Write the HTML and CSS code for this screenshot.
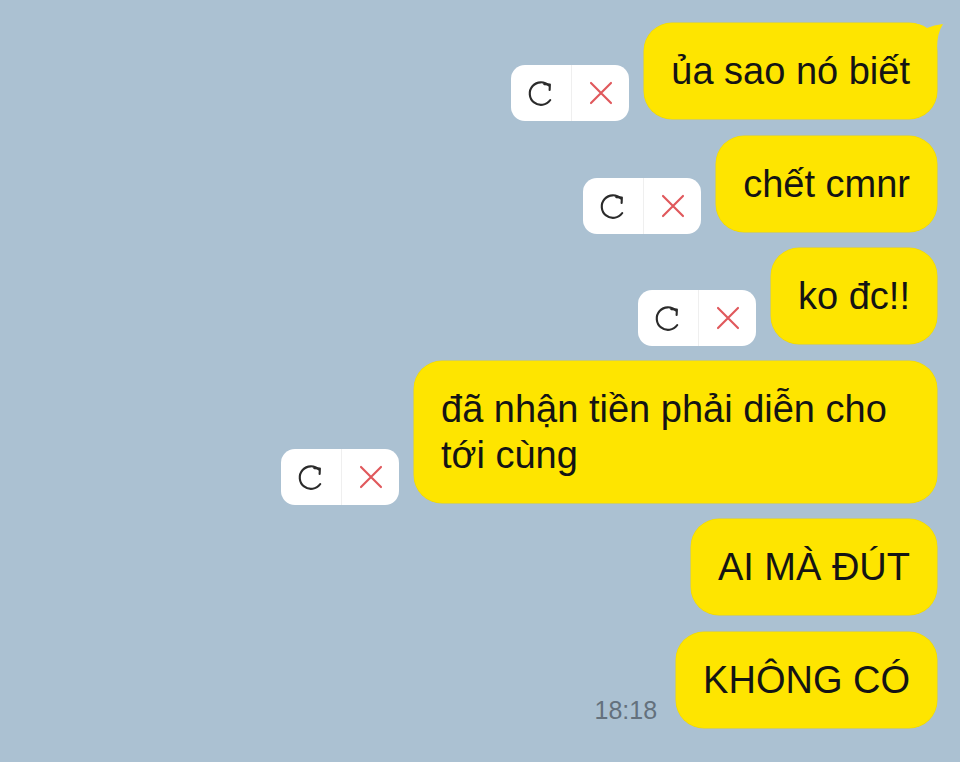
FILE: index.html
```html
<!DOCTYPE html>
<html lang="vi">
<head>
<meta charset="utf-8">
<title>Chat</title>
<link rel="stylesheet" href="styles.css">
</head>
<body>
<main class="chat">
  <div class="row">
    <div class="actions">
      <span class="act act-retry"><svg viewBox="0 0 24 24" width="30" height="30"><path d="M19.4 17.6 A9 9 0 1 1 18.4 6.1" fill="none" stroke="#2b2b2b" stroke-width="1.7" stroke-linecap="round"/><polyline points="14.6,4.9 19.1,5.2 18.9,9.6" fill="none" stroke="#2b2b2b" stroke-width="1.7" stroke-linecap="round" stroke-linejoin="round"/></svg></span>
      <span class="act act-del"><svg viewBox="0 0 24 24" width="30" height="30"><path d="M4 4 L20 20 M20 4 L4 20" stroke="#e0585c" stroke-width="1.7" stroke-linecap="round"/></svg></span>
    </div>
    <div class="bubble has-tail">ủa sao nó biết<svg class="tail" viewBox="0 0 36 26" width="36" height="26"><path d="M0 0 Q14 0 20 5 Q27 2 36 1 Q30 10 30 26 L0 26 Z" fill="#fee500"/></svg></div>
  </div>
  <div class="row">
    <div class="actions">
      <span class="act act-retry"><svg viewBox="0 0 24 24" width="30" height="30"><path d="M19.4 17.6 A9 9 0 1 1 18.4 6.1" fill="none" stroke="#2b2b2b" stroke-width="1.7" stroke-linecap="round"/><polyline points="14.6,4.9 19.1,5.2 18.9,9.6" fill="none" stroke="#2b2b2b" stroke-width="1.7" stroke-linecap="round" stroke-linejoin="round"/></svg></span>
      <span class="act act-del"><svg viewBox="0 0 24 24" width="30" height="30"><path d="M4 4 L20 20 M20 4 L4 20" stroke="#e0585c" stroke-width="1.7" stroke-linecap="round"/></svg></span>
    </div>
    <div class="bubble">chết cmnr</div>
  </div>
  <div class="row">
    <div class="actions">
      <span class="act act-retry"><svg viewBox="0 0 24 24" width="30" height="30"><path d="M19.4 17.6 A9 9 0 1 1 18.4 6.1" fill="none" stroke="#2b2b2b" stroke-width="1.7" stroke-linecap="round"/><polyline points="14.6,4.9 19.1,5.2 18.9,9.6" fill="none" stroke="#2b2b2b" stroke-width="1.7" stroke-linecap="round" stroke-linejoin="round"/></svg></span>
      <span class="act act-del"><svg viewBox="0 0 24 24" width="30" height="30"><path d="M4 4 L20 20 M20 4 L4 20" stroke="#e0585c" stroke-width="1.7" stroke-linecap="round"/></svg></span>
    </div>
    <div class="bubble">ko đc!!</div>
  </div>
  <div class="row">
    <div class="actions">
      <span class="act act-retry"><svg viewBox="0 0 24 24" width="30" height="30"><path d="M19.4 17.6 A9 9 0 1 1 18.4 6.1" fill="none" stroke="#2b2b2b" stroke-width="1.7" stroke-linecap="round"/><polyline points="14.6,4.9 19.1,5.2 18.9,9.6" fill="none" stroke="#2b2b2b" stroke-width="1.7" stroke-linecap="round" stroke-linejoin="round"/></svg></span>
      <span class="act act-del"><svg viewBox="0 0 24 24" width="30" height="30"><path d="M4 4 L20 20 M20 4 L4 20" stroke="#e0585c" stroke-width="1.7" stroke-linecap="round"/></svg></span>
    </div>
    <div class="bubble bubble-wide">đã nhận tiền phải diễn cho tới cùng</div>
  </div>
  <div class="row">
    <div class="bubble">AI MÀ ĐÚT</div>
  </div>
  <div class="row">
    <span class="time">18:18</span>
    <div class="bubble">KHÔNG CÓ</div>
  </div>
</main>
</body>
</html>
```
FILE: styles.css
```css
* { box-sizing: border-box; }
html, body {
  margin: 0;
  padding: 0;
  background: #abc1d2;
}
body {
  width: 960px;
  height: 762px;
  overflow: hidden;
  font-family: "Liberation Sans", Arial, sans-serif;
}
.chat {
  display: flex;
  flex-direction: column;
  align-items: flex-end;
  gap: 16.6px;
  padding: 23px 23px 0 0;
}
.row {
  display: flex;
  align-items: flex-end;
  gap: 15px;
}
.bubble {
  position: relative;
  background: #fee500;
  border-radius: 28px;
  padding: 25px 27px;
  font-size: 38px;
  line-height: 46px;
  color: #141414;
  max-width: 523px;
  box-shadow: 0 0 0 0.5px #f0d800;
}
.bubble-wide {
  width: 523px;
}
.tail {
  position: absolute;
  top: 0;
  right: -6px;
  display: block;
}
.actions {
  display: flex;
  width: 118px;
  height: 56px;
  background: #ffffff;
  border-radius: 14px;
  margin-bottom: -2px;
  overflow: hidden;
}
.act {
  display: flex;
  align-items: center;
  justify-content: center;
}
.act-retry {
  width: 61px;
  border-right: 1px solid #efefef;
}
.act-del {
  flex: 1;
}
.act svg {
  display: block;
}
.time {
  font-size: 25px;
  line-height: 24px;
  color: #64717d;
  margin-bottom: 6px;
  margin-right: 4px;
}
```
